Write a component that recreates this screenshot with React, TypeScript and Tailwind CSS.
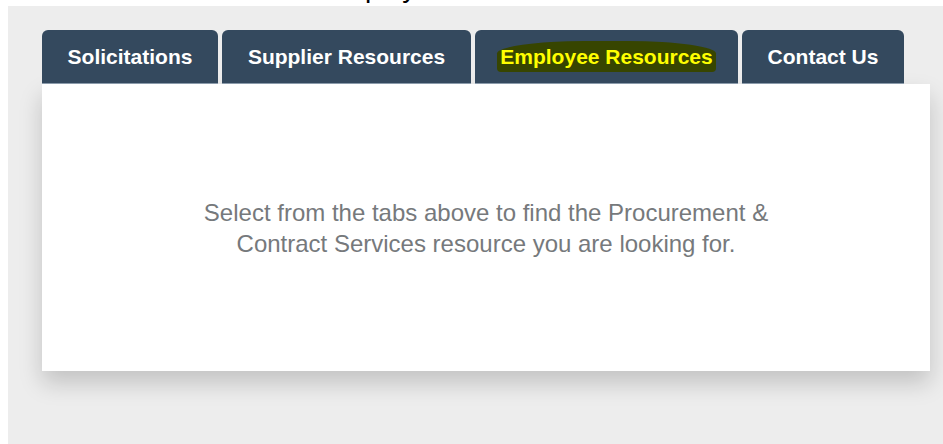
import React from 'react'

const TABS = [
  { label: 'Solicitations', width: 'w-[176px]' },
  { label: 'Supplier Resources', width: 'w-[249px]' },
  { label: 'Employee Resources', width: 'w-[263px]', marked: true },
  { label: 'Contact Us', width: 'w-[162px]' },
]

export default function App() {
  return (
    <div className="flex h-[444px] w-[943px] flex-col overflow-hidden bg-white font-['Liberation_Sans',Arial,sans-serif]">
      {/* page heading, scrolled mostly out of view */}
      <div className="h-[6px] shrink-0 overflow-hidden">
        <div className="ml-[323px] mt-[-26px] text-[28px] leading-none text-black">
          Employee
        </div>
      </div>

      <div className="ml-[8px] flex-1 bg-[#ededed] pl-[34px] pt-[24px]">
        <div className="flex items-end gap-[4px]">
          {TABS.map((tab) => (
            <div
              key={tab.label}
              className={`${tab.width} flex h-[54px] items-center justify-center rounded-t-[6px] border-b border-[#8b9bab] bg-[#34495e] text-[21px] font-bold text-white`}
            >
              {tab.marked ? (
                <span className="rounded-t-[40%] rounded-b-[4px] bg-[#374500] px-[3px] text-[#ffff00]">
                  {tab.label}
                </span>
              ) : (
                tab.label
              )}
            </div>
          ))}
        </div>

        <div className="flex h-[287px] w-[888px] items-center justify-center bg-white shadow-[0_12px_22px_rgba(0,0,0,0.18)]">
          <p className="text-center text-[24px] leading-[31px] text-[#76797c]">
            Select from the tabs above to find the Procurement &amp;
            <br />
            Contract Services resource you are looking for.
          </p>
        </div>
      </div>
    </div>
  )
}
